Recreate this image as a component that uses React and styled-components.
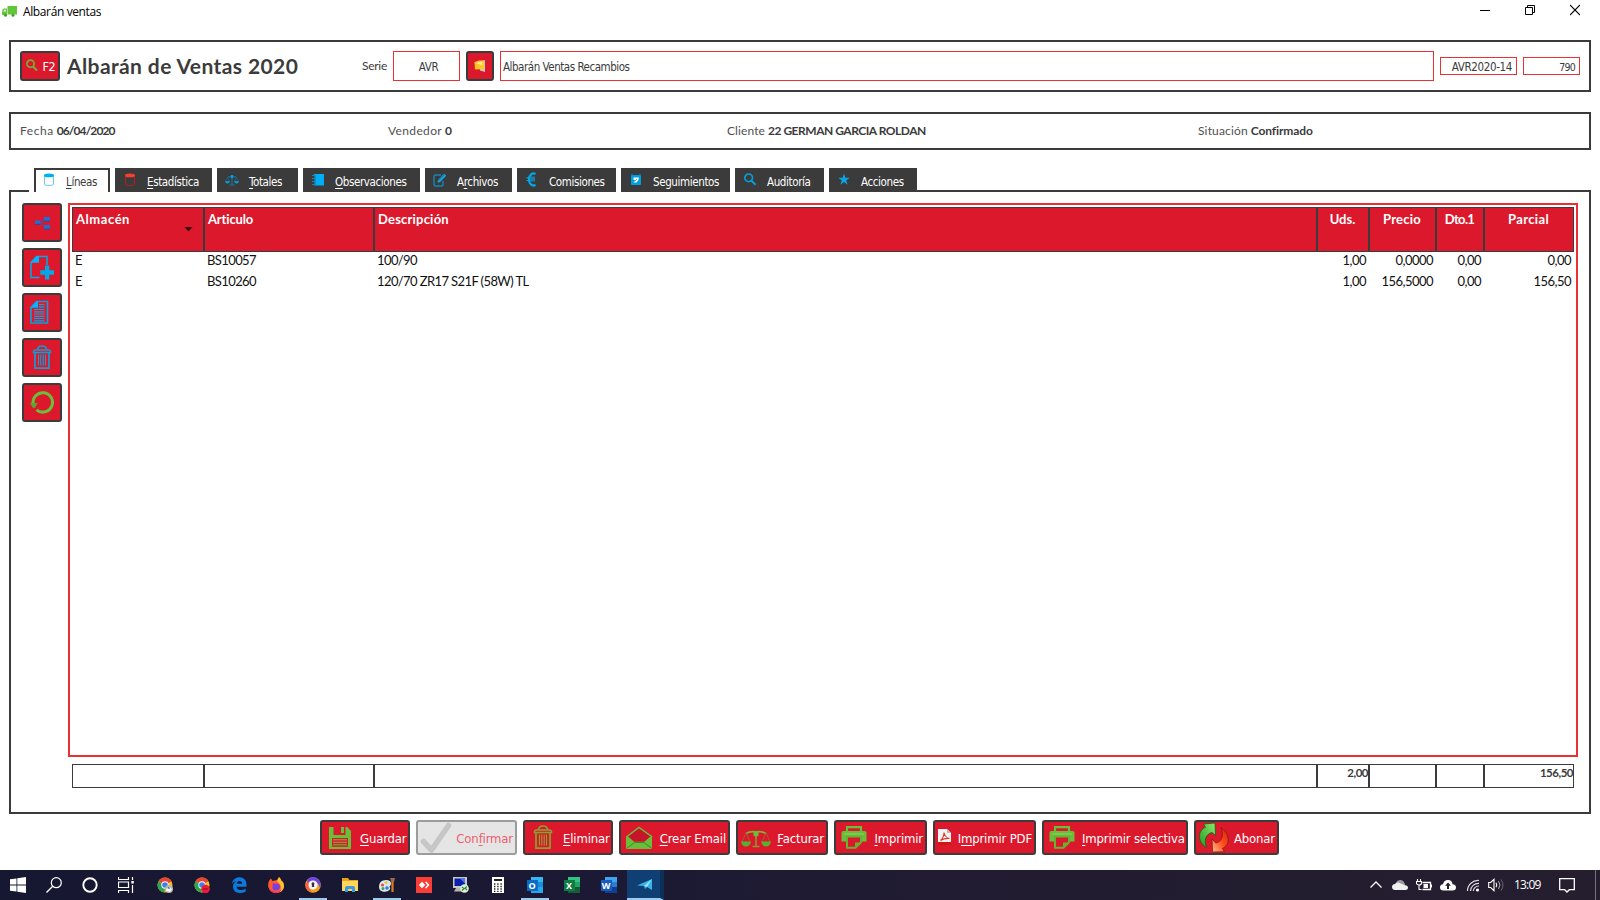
import React from "react";
import styled, { createGlobalStyle } from "styled-components";

const INK = "#3b3b3b";
const RED = "#dc182c";
const LINE = "#ea3033";
const BLUE = "#00a8e8";
const GREEN = "#6abf3a";
const GEO = '"Lato", "Open Sans", sans-serif';
const UI = '"DejaVu Sans Condensed", "DejaVu Sans", sans-serif';
const SYS = '"Open Sans", "Noto Sans", sans-serif';

const Global = createGlobalStyle`
  * { box-sizing: border-box; }
  body { margin: 0; background: #fff; color: ${INK}; overflow: hidden; }
  svg { display: block; flex: none; }
  u { text-underline-offset: 2px; text-decoration-thickness: 1px; text-decoration-skip-ink: none; }
`;

const Page = styled.div`
  width: 1600px;
  height: 900px;
  display: flex;
  flex-direction: column;
`;

/* window title bar */
const TitleBar = styled.header`
  height: 40px;
  display: flex;
  align-items: flex-start;
  padding: 0 20px 0 2px;
`;
const AppIcon = styled.svg`
  margin: 6px 6px 0 0;
`;
const WindowTitle = styled.span`
  flex: 1;
  font: 12px/24px ${SYS};
  letter-spacing: -0.38px;
  color: #000;
`;
const WindowControls = styled.div`
  display: flex;
  gap: 35px;
  padding-top: 4px;
`;

/* framed strips */
const Frame = styled.section`
  margin: 0 9px;
  border: 2px solid ${INK};
`;
const DocHeader = styled(Frame)`
  height: 52px;
  flex: none;
  display: flex;
  align-items: center;
  padding: 0 9px;
`;
const RedButton = styled.button`
  width: ${(p) => p.$w}px;
  height: ${(p) => p.$h}px;
  flex: none;
  display: flex;
  align-items: center;
  justify-content: ${(p) => p.$justify || "center"};
  gap: 4px;
  padding: 0 ${(p) => p.$padX || 0}px;
  border: 2px solid ${(p) => (p.$disabled ? "#9c9c9c" : INK)};
  border-radius: 3px;
  background: ${(p) => (p.$disabled ? "#e5e5e5" : RED)};
  color: ${(p) => (p.$disabled ? "#ee5f70" : "#fff")};
  font: 13px ${UI};
  letter-spacing: -0.16px;
  white-space: nowrap;
`;
const ButtonLabel = styled.span`
  padding-top: 2px;
`;
const KeyLabel = styled.span`
  padding-top: 2px;
  font: 12.5px/20px ${UI};
  letter-spacing: -0.6px;
`;
const DocTitle = styled.h1`
  width: 295px;
  margin: 0 0 0 7px;
  font: 700 21px/30px ${GEO};
  letter-spacing: 0.4px;
  white-space: nowrap;
`;
const FieldLabel = styled.label`
  width: 31px;
  font: 12px/30px ${GEO};
  letter-spacing: -0.28px;
`;
const Field = styled.div`
  ${(p) => (p.$w ? `width: ${p.$w}px;` : "flex: 1;")}
  height: ${(p) => p.$h}px;
  margin-left: ${(p) => p.$gap || 0}px;
  padding: ${(p) => (p.$h > 20 ? 2 : 1)}px 4px 0 2px;
  border: 1px solid ${LINE};
  font: ${(p) => p.$size || 11.5}px/${(p) => (p.$h > 20 ? 27 : 17)}px ${UI};
  letter-spacing: ${(p) => p.$ls || -0.42}px;
  text-align: ${(p) => p.$align || "left"};
`;
const FolderButton = styled(RedButton)`
  margin-left: 6px;
`;

const InfoStrip = styled(Frame)`
  height: 38px;
  flex: none;
  margin-top: 20px;
  padding-left: 9px;
  display: grid;
  grid-template-columns: 368px 339px 471px 1fr;
  font: 12px/34px ${GEO};
`;
const InfoItem = styled.div`
  display: flex;
  gap: 3px;
  white-space: nowrap;
`;
const InfoLabel = styled.span`
  color: #505050;
  letter-spacing: ${(p) => p.$ls}px;
`;
const InfoValue = styled.b`
  letter-spacing: ${(p) => p.$ls}px;
`;

/* tabs */
const TabStrip = styled.nav`
  position: relative;
  width: 888px;
  height: 24px;
  flex: none;
  margin: 18px 0 -2px 29px;
  padding-left: 5px;
  display: flex;
  gap: 5px;
  background: #fff;
`;
const Tab = styled.div`
  width: ${(p) => p.$w}px;
  height: 24px;
  flex: none;
  display: flex;
  padding-left: ${(p) => (p.$active ? 5 : 7)}px;
  border: solid ${INK};
  border-width: ${(p) => (p.$active ? "2px 2px 0" : "0")};
  background: ${(p) => (p.$active ? "#fff" : INK)};
  color: ${(p) => (p.$active ? INK : "#fff")};
  font: 11.5px/17px ${UI};
  letter-spacing: -0.38px;
  white-space: nowrap;
  svg { margin-top: ${(p) => (p.$active ? 2 : 4)}px; }
`;
const TabLabel = styled.span`
  margin: ${(p) => (p.$active ? 4 : 6)}px 0 0 9px;
`;

/* document body */
const Body = styled(Frame)`
  height: 624px;
  flex: none;
  display: flex;
  gap: 6px;
  padding: 11px 11px 0 11px;
`;
const Toolbar = styled.div`
  display: flex;
  flex-direction: column;
  gap: 6px;
`;
const GridArea = styled.div`
  flex: 1;
`;
const GridBox = styled.div`
  height: 554px;
  border: 2px solid ${LINE};
  padding: 2px;
`;
const columns = "132px 170px 943px 52px 67px 48px 90px";
const HeadRow = styled.div`
  display: grid;
  grid-template-columns: ${columns};
  height: 45px;
`;
const HeadCell = styled.div`
  display: flex;
  justify-content: ${(p) => (p.$center ? "center" : "space-between")};
  border: 1px solid ${INK};
  padding: 2px 10px 0 3px;
  ${(p) => p.$center && "padding: 2px 1px 0 0;"}
  background: ${RED};
  color: #fff;
  font: 700 13px/19px ${GEO};
  letter-spacing: ${(p) => p.$ls}px;
`;
const SortArrow = styled.svg`
  margin-top: 17px;
`;
const Row = styled.div`
  display: grid;
  grid-template-columns: ${columns};
  height: 21px;
  color: #111;
  font: 13px/16px ${GEO};
`;
const Cell = styled.div`
  padding: 0 3px;
  text-align: ${(p) => (p.$right ? "right" : "left")};
  letter-spacing: ${(p) => (p.$right ? -0.52 : -0.6)}px;
`;
const TotalRow = styled.div`
  display: grid;
  grid-template-columns: ${columns};
  height: 24px;
  margin: 7px 4px 0;
`;
const TotalCell = styled.div`
  border: 1px solid ${INK};
  text-align: right;
  font: 700 11.5px/16px ${GEO};
  letter-spacing: -0.5px;
`;

const Actions = styled.div`
  display: flex;
  gap: 6px;
  margin: 6px 0 15px 320px;
`;

/* taskbar */
const Taskbar = styled.footer`
  height: 30px;
  display: flex;
  background: linear-gradient(90deg, #161731 0, #1b1934 38%, #211c31 60%, #251e2f 100%);
`;
const TaskCell = styled.div`
  width: ${(p) => p.$w}px;
  height: 30px;
  flex: none;
  display: flex;
  align-items: center;
  justify-content: center;
  ${(p) => p.$running && "background: linear-gradient(#9ccbf0, #9ccbf0) 5px 28px / 28px 2px no-repeat;"}
  ${(p) => p.$active && `
    background: #0f3f73;
    border-bottom: 2px solid #9ccbf0;
    border-right: 4px solid #0c3158;
    padding: 2px 0 0 3px;`}
`;
const Apps = styled.div`
  display: flex;
  margin-left: 2px;
`;
const Tray = styled.div`
  margin-left: auto;
  display: flex;
  align-items: center;
  gap: 8px;
`;
const Clock = styled.time`
  margin-left: 2px;
  width: 37px;
  font: 12px/30px ${SYS};
  letter-spacing: -0.8px;
  color: #fff;
`;
const ShowDesktop = styled.div`
  width: 5px;
  height: 30px;
  margin-left: 12px;
  border-left: 1px solid #77727e;
`;

/* "&" marks the accelerator letter */
const Accel = ({ text }) => {
  const i = text.indexOf("&");
  if (i < 0) return text;
  return (
    <>
      {text.slice(0, i)}
      <u>{text[i + 1]}</u>
      {text.slice(i + 2)}
    </>
  );
};

const Svg = ({ w = 16, h = 16, children, ...rest }) => (
  <svg width={w} height={h} viewBox={`0 0 ${w} ${h}`} fill="none" {...rest}>
    {children}
  </svg>
);

const Cylinder = ({ c, top }) => (
  <Svg>
    <path d="M3.5 4v8.5c0 1.3 9 1.3 9 0V4" stroke={c} strokeWidth="1" />
    <ellipse cx="8" cy="3.4" rx="5" ry="1.9" fill={top} />
  </Svg>
);

const tabs = [
  { w: 76, label: "&Líneas", active: true, icon: <Cylinder c="#6cc6ee" top="#00aef5" /> },
  { w: 97, label: "&Estadística", icon: <Cylinder c="#b3201f" top="#ff3b2c" /> },
  {
    w: 81, label: "&Totales",
    icon: (
      <Svg>
        <path d="M3.5 5.5Q8 2.5 12.5 5.5M8 3.5v9M5.5 13h5" stroke="#0b7fb4" />
        <path d="M3.5 5.5 1.5 9.5h4zM12.5 5.5l-2 4h4z" stroke="#0b6c98" strokeWidth=".7" />
        <path d="M1 9.3h5q-.5 2.2-2.5 2.2T1 9.3zM10 9.3h5q-.5 2.2-2.5 2.2T10 9.3z" fill="#0d9bdc" />
        <rect x="6.8" y="3" width="2.4" height="3.2" fill="#0d9bdc" />
      </Svg>
    ),
  },
  {
    w: 117, label: "&Observaciones",
    icon: (
      <Svg>
        <rect x="4" y="2" width="10" height="11.5" fill="#00aef5" />
        <path d="M2 3.500h4M2 6.500h4M2 9.500h4M2 12.500h4" stroke="#1886bd" strokeWidth="1.2" />
        <path d="M3 5h2.500M3 8h2.500M3 11h2.500" stroke={INK} strokeWidth="1" />
      </Svg>
    ),
  },
  {
    w: 87, label: "A&rchivos",
    icon: (
      <Svg>
        <path d="M9 3H3.500q-1.500 0-1.500 1.500v8Q2 14 3.500 14h6q1.500 0 1.500-1.500V9" stroke="#1487b8" strokeWidth="1.4" />
        <path d="M5.500 10.800 6 8l6-6.200 2.200 2L8.200 10z" fill="#10a5e5" />
        <path d="M6.500 8.500 12 3" stroke="#24617d" strokeWidth=".7" />
      </Svg>
    ),
  },
  {
    w: 99, label: "Comisiones",
    icon: (
      <Svg>
        <path d="M11.500 2.200C8.500 0 5 3 5 7.200s3 7.800 6.500 5.600" stroke={BLUE} strokeWidth="2.200" />
        <path d="M2.500 5.800H8M2.500 8.500H8" stroke={BLUE} strokeWidth="1.200" />
        <path d="M6.500 4.500h4.500v5H6.500z" fill="#1c7fa8" />
      </Svg>
    ),
  },
  {
    w: 109, label: "Seguimientos",
    icon: (
      <Svg>
        <rect x="3" y="3" width="10" height="10" rx="1" fill="#009fe3" />
        <path d="M4 1.800v2M12 1.800v2" stroke="#0b7fb4" strokeWidth="1.400" />
        <path d="M5.500 5.500h5.500q0 3-2.500 5H5.500l2-2.500h-2z" fill="#fff" />
        <path d="m6.500 9.500 2.500-2.500" stroke="#009fe3" strokeWidth=".8" />
      </Svg>
    ),
  },
  {
    w: 89, label: "Auditoría",
    icon: (
      <Svg>
        <circle cx="6.700" cy="5.800" r="3.800" stroke="#069fdb" strokeWidth="1.700" />
        <path d="m9.500 8.800 4 4" stroke="#069fdb" strokeWidth="2" />
      </Svg>
    ),
  },
  {
    w: 88, label: "Acciones",
    icon: (
      <Svg>
        <path d="m8 1.500 1.400 4.300h4.300l-3.500 2.600 1.400 4.300L8 10l-3.600 2.700 1.400-4.300-3.500-2.600h4.300z" fill="#0aa5e6" />
      </Svg>
    ),
  },
];

const Trash = ({ c }) => (
  <Svg w={32} h={31}>
    <path d="M11.500 8q0-4 4.500-4t4.500 4" stroke={c} strokeWidth="1.600" />
    <path d="M7.500 10.500v-1.200Q8 8 9.500 8h13q1.500 0 2 1.300v1.200z" stroke={c} strokeWidth="1.500" />
    <path d="M9 11v15.200h14V11" stroke={c} strokeWidth="1.700" />
    <path d="M12.500 12.500v11M14.800 12.500v11M17.200 12.500v11M19.500 12.500v11" stroke={c} strokeWidth="1.100" />
  </Svg>
);

const Printer = () => (
  <Svg w={32} h={31}>
    <path d="M9 9V5.200h14V9" stroke={GREEN} strokeWidth="2.200" />
    <path d="M3.500 11q0-2 2-2h21q2 0 2 2v8.500h-5V15h-15v4.500h-5z" fill={GREEN} />
    <path d="M9 14.500v11.300h8.500l5.500-5.500v-5.800z" fill={RED} stroke="#65b332" strokeWidth="2" />
    <path d="M17 26.500v-6h6.500z" fill="#65b332" />
    <path d="M6 12h20" stroke="#8ed35e" strokeWidth="1" />
  </Svg>
);

const toolbarIcons = [
  <Svg key="tree" w={32} h={31}>
    <path d="M14 15.500h1.500M15.500 15.500l3-3.500M15.500 15.500l3 4.500" stroke="#4a4f9c" strokeWidth="1.200" />
    <rect x="9" y="13.500" width="5.500" height="3.800" fill="#1f6fd6" />
    <rect x="18" y="10" width="6" height="4" fill="#1f6fd6" />
    <rect x="18" y="18" width="6" height="4" fill="#1f6fd6" />
    <path d="M9 17.300h5.500M18 14h6M18 22h6" stroke="#214a93" strokeWidth=".8" />
  </Svg>,
  <Svg key="add" w={32} h={31}>
    <path d="M5 10.500 10.500 4.500H21V13M13.500 25.500H5V10" stroke={BLUE} strokeWidth="1.500" />
    <path d="M4.500 10.800 10.800 4H13v6.800z" fill="#00b4ff" />
    <path d="M19 13.500h4.300v4.800H28v4.400h-4.700v4.800H19v-4.800h-4.700v-4.400H19z" fill={BLUE} />
  </Svg>,
  <Svg key="doc" w={32} h={31}>
    <path d="M5 10.500 10.500 4.500H21.500V26H5z" stroke="#0a9fdc" strokeWidth="1.700" />
    <path d="M4.500 10.800 10.800 4H12v6.800z" fill="#00b4ff" />
    <path d="M13 7.500h5.500M13 9.800h5.500M8 12.500h10.500M8 14.800h10.500M8 17h10.500M8 19.300h10.500M8 21.500h10.500M8 23.800h10.500" stroke={BLUE} strokeWidth="1.200" />
  </Svg>,
  <Trash key="trash" c="#0b9fd8" />,
  <Svg key="refresh" w={32} h={31}>
    <path d="M7.200 17a9.700 9.700 0 1 1 3.300 5.800" stroke={GREEN} strokeWidth="3" />
    <path d="M4 16h7.500l-2.500 5-2.500-.5z" fill="#5aa52f" />
  </Svg>,
];

const actions = [
  {
    w: 90, label: "&Guardar",
    icon: (
      <Svg w={32} h={31}>
        <path d="M5 5h4.500v8h12V5h1.800L27 9v18H5z" fill={GREEN} />
        <path d="M17 5h3v6h-3z" fill={GREEN} />
        <path d="M8 16h16v8.800H8z" fill={RED} />
        <path d="M9 17.800h14M9 20.300h14M9 22.800h14" stroke={GREEN} strokeWidth="1" />
      </Svg>
    ),
  },
  {
    w: 101, label: "Con&firmar", disabled: true,
    icon: (
      <Svg w={32} h={31}>
        <path d="m3.500 19.500 8 8.500L28.500 3.500" stroke="#c6c6c6" strokeWidth="5.500" strokeLinejoin="round" strokeLinecap="round" />
      </Svg>
    ),
  },
  { w: 90, label: "&Eliminar", icon: <Trash c="#83a52f" /> },
  {
    w: 111, label: "&Crear Email",
    icon: (
      <Svg w={32} h={31}>
        <path d="M4 14.500 16 5.500l12.500 9-7 6H11z" fill="#c8142a" stroke={GREEN} strokeWidth="1.500" />
        <path d="M3 14.500 11 20.500h10.500l7.500-6V27H3z" fill={GREEN} />
        <path d="m3.500 26.500 8-6h9.500l8 6" stroke="#3f8a23" strokeWidth="1" />
      </Svg>
    ),
  },
  {
    w: 92, label: "&Facturar",
    icon: (
      <Svg w={32} h={31}>
        <path d="M6 11.500Q10 9 16 10q6-1 10 1.500" stroke="#76b53a" strokeWidth="1.800" />
        <path d="M16 9v15M12.500 24.500h7" stroke="#8a9a34" strokeWidth="1.600" />
        <path d="M6 11 1.800 20M6 11l4.200 9M26 11l-4.200 9M26 11l4.200 9" stroke="#a5652e" strokeWidth=".9" />
        <path d="M1 19.500h10q-1 5-5 5t-5-5zM21 19.500h10q-1 5-5 5t-5-5z" fill="#58b030" />
        <path d="M13.500 9.500h5v4l-1.500 1h-2l-1.500-1z" fill={GREEN} />
      </Svg>
    ),
  },
  { w: 93, label: "&Imprimir", icon: <Printer /> },
  {
    w: 103, label: "I&mprimir PDF",
    icon: (
      <Svg w={16} h={20}>
        <path d="M1 1h9l4 4v12H1z" fill="#f3f3f3" />
        <path d="M10 1v4h4z" fill="#b9b9b9" />
        <path d="M1 14h13v3H1z" fill="#d01812" />
        <path d="M3.500 12.500Q7 9 7 4.500q1 5 5.500 6-5-.5-9 2z" stroke="#e03a2a" strokeWidth="1.100" />
      </Svg>
    ),
  },
  { w: 146, label: "&Imprimir selectiva", icon: <Printer /> },
  {
    w: 85, label: "Abonar",
    icon: (
      <Svg w={32} h={31}>
        <defs>
          <linearGradient id="up" x1="1" y1="0" x2="0" y2="1">
            <stop offset="0" stopColor="#8fe86a" />
            <stop offset="1" stopColor="#1f9a24" />
          </linearGradient>
          <linearGradient id="down" x1="1" y1="0" x2="0" y2="1">
            <stop offset="0" stopColor="#d81e0a" />
            <stop offset=".5" stopColor="#ff4d1c" />
            <stop offset="1" stopColor="#ffc08c" />
          </linearGradient>
        </defs>
        <path d="M8.500 25.500C-1.500 20 0 8 7.500 5.300L5.500 2l11.500-1 .5 12.500-3.500-3C8 12 5.500 18 8.500 25.500z" fill="url(#up)" stroke="#145c18" strokeWidth=".8" />
        <path d="M23 5.500C33 13 32 23 24.500 26.300l2 3.500-12 .2-.5-13 3.800 4C24 20 26 13 23 5.500z" fill="url(#down)" stroke="#84180c" strokeWidth=".8" />
      </Svg>
    ),
  },
];

const headers = [
  { label: "Almacén", ls: 0.55, sort: true },
  { label: "Articulo", ls: -0.15 },
  { label: "Descripción", ls: 0.2 },
  { label: "Uds.", ls: 0, center: true },
  { label: "Precio", ls: 0.23, center: true },
  { label: "Dto.1", ls: -0.65, center: true },
  { label: "Parcial", ls: 0.36, center: true },
];
const rows = [
  ["E", "BS10057", "100/90", "1,00", "0,0000", "0,00", "0,00"],
  ["E", "BS10260", "120/70 ZR17 S21F (58W) TL", "1,00", "156,5000", "0,00", "156,50"],
];
const totals = ["", "", "", "2,00", "", "", "156,50"];

const Chrome = ({ children }) => (
  <Svg>
    <circle cx="8" cy="8" r="7.500" fill="#fbc116" />
    <path d="M8 8 1.500 4.200A7.500 7.500 0 0 1 14.500 4.200z" fill="#ea4335" />
    <path d="M8 8 1.500 4.200A7.500 7.500 0 0 0 7.500 15.500z" fill="#2fa351" />
    <circle cx="8" cy="8" r="3.700" fill="#fff" />
    <circle cx="8" cy="8" r="2.800" fill="#3f7fea" />
    {children}
  </Svg>
);

const Tile = styled.span`
  width: 11px;
  height: 11px;
  display: block;
  background: ${(p) => p.$c};
  color: #fff;
  font: 700 9px/11px ${SYS};
  text-align: center;
`;
const OfficeBox = styled.span`
  width: 16px;
  height: 16px;
  padding-top: 3px;
  display: block;
  background:
    linear-gradient(${(p) => p.$a}, ${(p) => p.$a}) 4px 0 / 12px 5px no-repeat,
    linear-gradient(${(p) => p.$b}, ${(p) => p.$b}) 4px 5px / 12px 5px no-repeat,
    linear-gradient(${(p) => p.$d}, ${(p) => p.$d}) 4px 10px / 12px 6px no-repeat;
`;
const Office = ({ letter, a, b, c, d }) => (
  <OfficeBox $a={a} $b={b} $d={d}>
    <Tile $c={c}>{letter}</Tile>
  </OfficeBox>
);

const systemIcons = [
  <Svg key="start"><path d="M0 2.300 6.500 1.400v6.200H0zM7.300 1.300 16 0v7.600H7.300zM0 8.400h6.500v6.200L0 13.700zM7.300 8.400H16V16l-8.700-1.300z" fill="#fff" /></Svg>,
  <Svg key="search"><circle cx="10.300" cy="5.700" r="5" stroke="#fff" strokeWidth="1.200" /><path d="M6.700 9.300.5 15.500" stroke="#fff" strokeWidth="1.300" /></Svg>,
  <Svg key="cortana"><circle cx="8" cy="8" r="6.700" stroke="#fff" strokeWidth="1.900" /></Svg>,
  <Svg key="view"><path d="M.5 0v2.500h10V0M.5 16v-2.500h10V16M.5 5h10v5.500H.5zM14.500 0v3M14.500 8v8" stroke="#fff" strokeWidth="1.200" /><path d="M13.300 4h2.500v2.500h-2.500z" fill="#fff" /></Svg>,
];

const apps = [
  { icon: <Chrome><circle cx="12" cy="12" r="4" fill="#b7b7b7" /><path d="M9 14q0-4 3-4l3 2-2 3z" fill="#f5f5f5" /><path d="m10 11 2-1 1 2z" fill="#444" /></Chrome> },
  { icon: <Chrome><circle cx="11.500" cy="12" r="4.300" fill="#f0193c" /><path d="M9 12h5" stroke="#a80c27" strokeWidth="1.300" /></Chrome> },
  { icon: <Svg><path d="M.8 7.300C1.500 2.500 4.800.3 8.500.3c5 0 7 3.700 7 7.900v1.500H5.500c.1 3.600 5.500 4.400 9.200 2.100v3C9 17.500 2 15.800 2 9.500 2 7 3.500 5 5.500 4 3.300 4.300 1.700 5.500.8 7.300zM5.700 6.800h5.500c0-3.800-5-3.800-5.500 0z" fill="#0a7bdc" fillRule="evenodd" /></Svg> },
  { icon: <Svg><path d="M1 4q1-2 2-2.500L4.500 4 9 3l2-3q2 2 2.500 4l1.500 1q1.500 3 .7 6-1.700 5-7.700 5T.3 10Q-.2 7 1 4z" fill="#ff5a2e" /><path d="M11 0q2 2 2.500 4l1.500 1q1.500 3 .7 6-1.500 3.500-4 4.300Q15 8 9 4.500z" fill="#ffc22e" /><path d="M5 6q2 1 4 .5 3 .5 3 3.500T8 13.500 4.500 9.500z" fill="#7b3fe0" /><path d="M1 10q2 5 8 5 3-.5 4.500-3-1 4-5.500 4Q2 15.500 1 10z" fill="#f5257a" /></Svg> },
  { running: true, icon: <Svg><circle cx="8" cy="8" r="7.800" fill="#f3a01c" /><path d="M3 2Q8-2 13 2q4 4 2 9-1-6-7-7-4-.5-6 3 0-3 1-5z" fill="#6b45e8" /><path d="M.5 6Q0 10 3 13.500L8 16q-5-3-4-10z" fill="#ff5d3d" /><circle cx="8" cy="8" r="4.500" fill="#f7f7fa" /><path d="M8 5.300a1.500 1.500 0 0 1 1 2.600L9.300 10h-2.600L7 7.900a1.500 1.500 0 0 1 1-2.600z" fill="#3a3052" /></Svg> },
  { icon: <Svg><path d="M0 1h6l1.500 2H16v11H0z" fill="#e9a31f" /><path d="M0 4h16v10H0z" fill="#ffd65c" /><path d="M3 15v-4q0-2 2-2h6q2 0 2 2v4h-3v-3H6v3z" fill="#3a9ae0" /></Svg> },
  { running: true, icon: <Svg><path d="M0 10q0-7 7-7 5 0 5 3.500 0 2-1.500 3 1.500 2 0 3.500Q8 15.500 3.500 14.500 0 13.500 0 10z" fill="#d7e7f2" /><circle cx="7" cy="5.500" r="1.500" fill="#f2c42b" /><circle cx="3.500" cy="8" r="1.500" fill="#e04b3a" /><circle cx="4" cy="11.500" r="1.500" fill="#46a545" /><circle cx="8" cy="11" r="1.700" fill="#3578d4" /><path d="M13.500 4v11" stroke="#e07c1f" strokeWidth="2.200" /><path d="M11 1h5l-1 4h-2.500z" fill="#a06a48" /></Svg> },
  { icon: <Svg><path d="M0 0h16v16H0z" fill="#fb3e35" /><path d="m6 4.800 3.200 3.200L6 11.200 2.800 8z" fill="#fff" /><path d="m9 5.300 1.200-.8L13.500 8l-3.300 3.500-1.200-.8L11.300 8z" fill="#fff" /></Svg> },
  { icon: <Svg><path d="M0 0h14v11H0z" fill="#c9c9c4" /><path d="M1.500 1.500h10.500v7.500H1.500z" fill="#0a1fae" /><path d="M7 1.500h5v5z" fill="#4a78f0" /><path d="M3 11h6l1 3.500H1z" fill="#b5b5ad" /><circle cx="11.500" cy="11.500" r="4.300" fill="#dfeedb" /><path d="m9 10 2 1.800L9 13.500M14 9.500 12 11l2 2" stroke="#2c8c35" strokeWidth="1.200" /></Svg> },
  { icon: <Svg><path d="M2 0h12v16H2z" fill="#fff" /><path d="M4 2h8v2H4z" fill="#222" /><path d="M4 7h8M4 9.500h8M4 12h8M4 14.300h8" stroke="#222" strokeWidth="1.300" strokeDasharray="1.400 1.800" /></Svg> },
  { running: true, icon: <Office letter="O" a="#35b8f1" b="#1490df" c="#0a6cc4" d="#28a8ea" /> },
  { icon: <Office letter="X" a="#33c481" b="#21a366" c="#107c41" d="#185c37" /> },
  { icon: <Office letter="W" a="#41a5ee" b="#2b7cd3" c="#185abd" d="#103f91" /> },
  { active: true, icon: <Svg><path d="M0 8.500 15 2v11l-5-3-2 2-1-3z" fill="#37b3ea" /><path d="M7 9 15 2l-5 8z" fill="#9fe0fa" /></Svg> },
];

const trayIcons = [
  <Svg key="up"><path d="m2.500 10.500 5.500-5.500 5.500 5.500" stroke="#fff" strokeWidth="1.300" /></Svg>,
  <Svg key="cloud"><path d="M4 6q1.500-3.500 5-3 2.500.5 3.500 3l1.500 5H4z" fill="#9b97a3" /><path d="M3 13q-3-.3-3-3t3-3q2-2.500 5-.8l5 2q3 .3 3 2.500T13.500 13z" fill="#f0f0f3" /></Svg>,
  <Svg key="battery"><path d="M6.500 5.500h8v7h-8" stroke="#fff" strokeWidth="1.300" /><path d="M15.500 7.500v3" stroke="#fff" /><path d="M7.500 7h4.500v4H7.500z" fill="#fff" /><path d="M1.500 2v2.500M4.500 2v2.500M.5 4.500h5v2q-.5 1.500-2.500 1.500T.5 6.500zM3 8v4.500h2.500" stroke="#fff" strokeWidth="1.100" /></Svg>,
  <Svg key="upload"><path d="M3.500 13.500Q0 13.500 0 10.500t3-3.300Q4 3 8 3t4.500 4.200Q16 7.500 16 10.500t-3.500 3z" fill="#fff" /><path d="m8 5.500 3 3.200H9V12H7V8.700H5z" fill="#252032" /></Svg>,
  <Svg key="wifi"><path d="M3.500 14A10.500 10.500 0 0 1 15 3.500M6.500 14A8 8 0 0 1 15 6.300M9.300 14A5.500 5.500 0 0 1 15 9" stroke="#d9d7df" strokeWidth="1.200" /><circle cx="13.500" cy="13" r="1.600" fill="#fff" /></Svg>,
  <Svg key="volume"><path d="M.7 5.500h2L6 2.300v11.400L2.700 10.500h-2z" stroke="#fff" strokeWidth="1.100" /><path d="M8 5.800q1.500 2.200 0 4.400" stroke="#fff" strokeWidth="1.100" /><path d="M10.500 4.200q3 3.800 0 7.600" stroke="#b5b1bd" strokeWidth="1" /><path d="M13 2.500q4 5.500 0 11" stroke="#6b6674" strokeWidth="1" /></Svg>,
];

export default function App() {
  return (
    <Page>
      <Global />
      <TitleBar>
        <AppIcon width="15" height="12" viewBox="0 0 15 12">
          <path d="M5.500 0H15v8.500H5.500z" fill="#63c53a" />
          <path d="M0 5.500Q.5 2.500 2 2.500h3V9H0z" fill="#63c53a" />
          <path d="M1.300 5.500 2.200 3.700H4v1.800z" fill="#e8f8df" />
          <circle cx="3.500" cy="9.300" r="1.500" fill="#4c9e2b" />
          <circle cx="11" cy="9.300" r="1.500" fill="#4c9e2b" />
        </AppIcon>
        <WindowTitle>Albarán ventas</WindowTitle>
        <WindowControls>
          <Svg w={10} h={12}><path d="M0 6.500h10" stroke="#000" /></Svg>
          <Svg w={10} h={12}><path d="M.5 3.500h7v7h-7zM2.500 3.500v-2h7v7h-2" stroke="#000" /></Svg>
          <Svg w={10} h={12}><path d="m0 1 10 10M10 1 0 11" stroke="#000" strokeWidth="1.100" /></Svg>
        </WindowControls>
      </TitleBar>

      <DocHeader>
        <RedButton $w={40} $h={30} $justify="space-between" $padX={3}>
          <Svg w={13} h={14}>
            <circle cx="5.500" cy="4.700" r="3.600" stroke="#75b035" strokeWidth="1.700" />
            <path d="m8 7.500 4 4" stroke="#75b035" strokeWidth="2" />
          </Svg>
          <KeyLabel>F2</KeyLabel>
        </RedButton>
        <DocTitle>Albarán de Ventas 2020</DocTitle>
        <FieldLabel>Serie</FieldLabel>
        <Field $w={67} $h={30} $align="center" $ls={-0.3}>&nbsp;&nbsp;AVR</Field>
        <FolderButton $w={28} $h={30}>
          <Svg>
            <path d="m7 3 6-1v12l-5-1.500z" fill="#c9c9bb" />
            <path d="M2.500 4 7 2.500l5 .5v8L3 11.500z" fill="#ffc620" />
            <path d="m3.500 5 7-1.500v4z" fill="#ffe68c" />
          </Svg>
        </FolderButton>
        <Field $h={30} $gap={6} $ls={-0.47}>Albarán Ventas Recambios</Field>
        <Field $w={77} $h={18} $gap={6} $align="right" $ls={-0.35}>AVR2020-14</Field>
        <Field $w={57} $h={18} $gap={6} $align="right" $size={10.5} $ls={-0.8}>790</Field>
      </DocHeader>

      <InfoStrip>
        <InfoItem><InfoLabel $ls={0.55}>Fecha</InfoLabel><InfoValue $ls={-0.9}>06/04/2020</InfoValue></InfoItem>
        <InfoItem><InfoLabel $ls={0.35}>Vendedor</InfoLabel><InfoValue $ls={0}>0</InfoValue></InfoItem>
        <InfoItem><InfoLabel $ls={0.1}>Cliente</InfoLabel><InfoValue $ls={-0.48}>22 GERMAN GARCIA ROLDAN</InfoValue></InfoItem>
        <InfoItem><InfoLabel $ls={0.15}>Situación</InfoLabel><InfoValue $ls={-0.1}>Confirmado</InfoValue></InfoItem>
      </InfoStrip>

      <TabStrip>
        {tabs.map((t) => (
          <Tab key={t.label} $w={t.w} $active={t.active}>
            {t.icon}
            <TabLabel $active={t.active}><Accel text={t.label} /></TabLabel>
          </Tab>
        ))}
      </TabStrip>

      <Body>
        <Toolbar>
          {toolbarIcons.map((icon) => (
            <RedButton key={icon.key} $w={40} $h={39}>{icon}</RedButton>
          ))}
        </Toolbar>
        <GridArea>
          <GridBox>
            <HeadRow>
              {headers.map((h) => (
                <HeadCell key={h.label} $ls={h.ls} $center={h.center}>
                  {h.label}
                  {h.sort && (
                    <SortArrow width="9" height="5" viewBox="0 0 9 5">
                      <path d="M.5 0h8l-4 4.500z" fill="#3b0a12" />
                    </SortArrow>
                  )}
                </HeadCell>
              ))}
            </HeadRow>
            {rows.map((r) => (
              <Row key={r[1]}>
                {r.map((v, i) => (
                  <Cell key={i} $right={i > 2}>{v}</Cell>
                ))}
              </Row>
            ))}
          </GridBox>
          <TotalRow>
            {totals.map((v, i) => (
              <TotalCell key={i}>{v}</TotalCell>
            ))}
          </TotalRow>
        </GridArea>
      </Body>

      <Actions>
        {actions.map((a) => (
          <RedButton key={a.label} $w={a.w} $h={35} $justify="space-between" $padX={2} $disabled={a.disabled}>
            {a.icon}
            <ButtonLabel><Accel text={a.label} /></ButtonLabel>
          </RedButton>
        ))}
      </Actions>

      <Taskbar>
        {systemIcons.map((icon) => (
          <TaskCell key={icon.key} $w={36}>{icon}</TaskCell>
        ))}
        <Apps>
          {apps.map((a, i) => (
            <TaskCell key={i} $w={37} $running={a.running} $active={a.active}>{a.icon}</TaskCell>
          ))}
        </Apps>
        <Tray>
          {trayIcons}
          <Clock>13:09</Clock>
          <Svg><path d="M.7 1.700h14.600v11h-5L8 15l-2.300-2.300h-5z" stroke="#fff" strokeWidth="1.300" /></Svg>
          <ShowDesktop />
        </Tray>
      </Taskbar>
    </Page>
  );
}
